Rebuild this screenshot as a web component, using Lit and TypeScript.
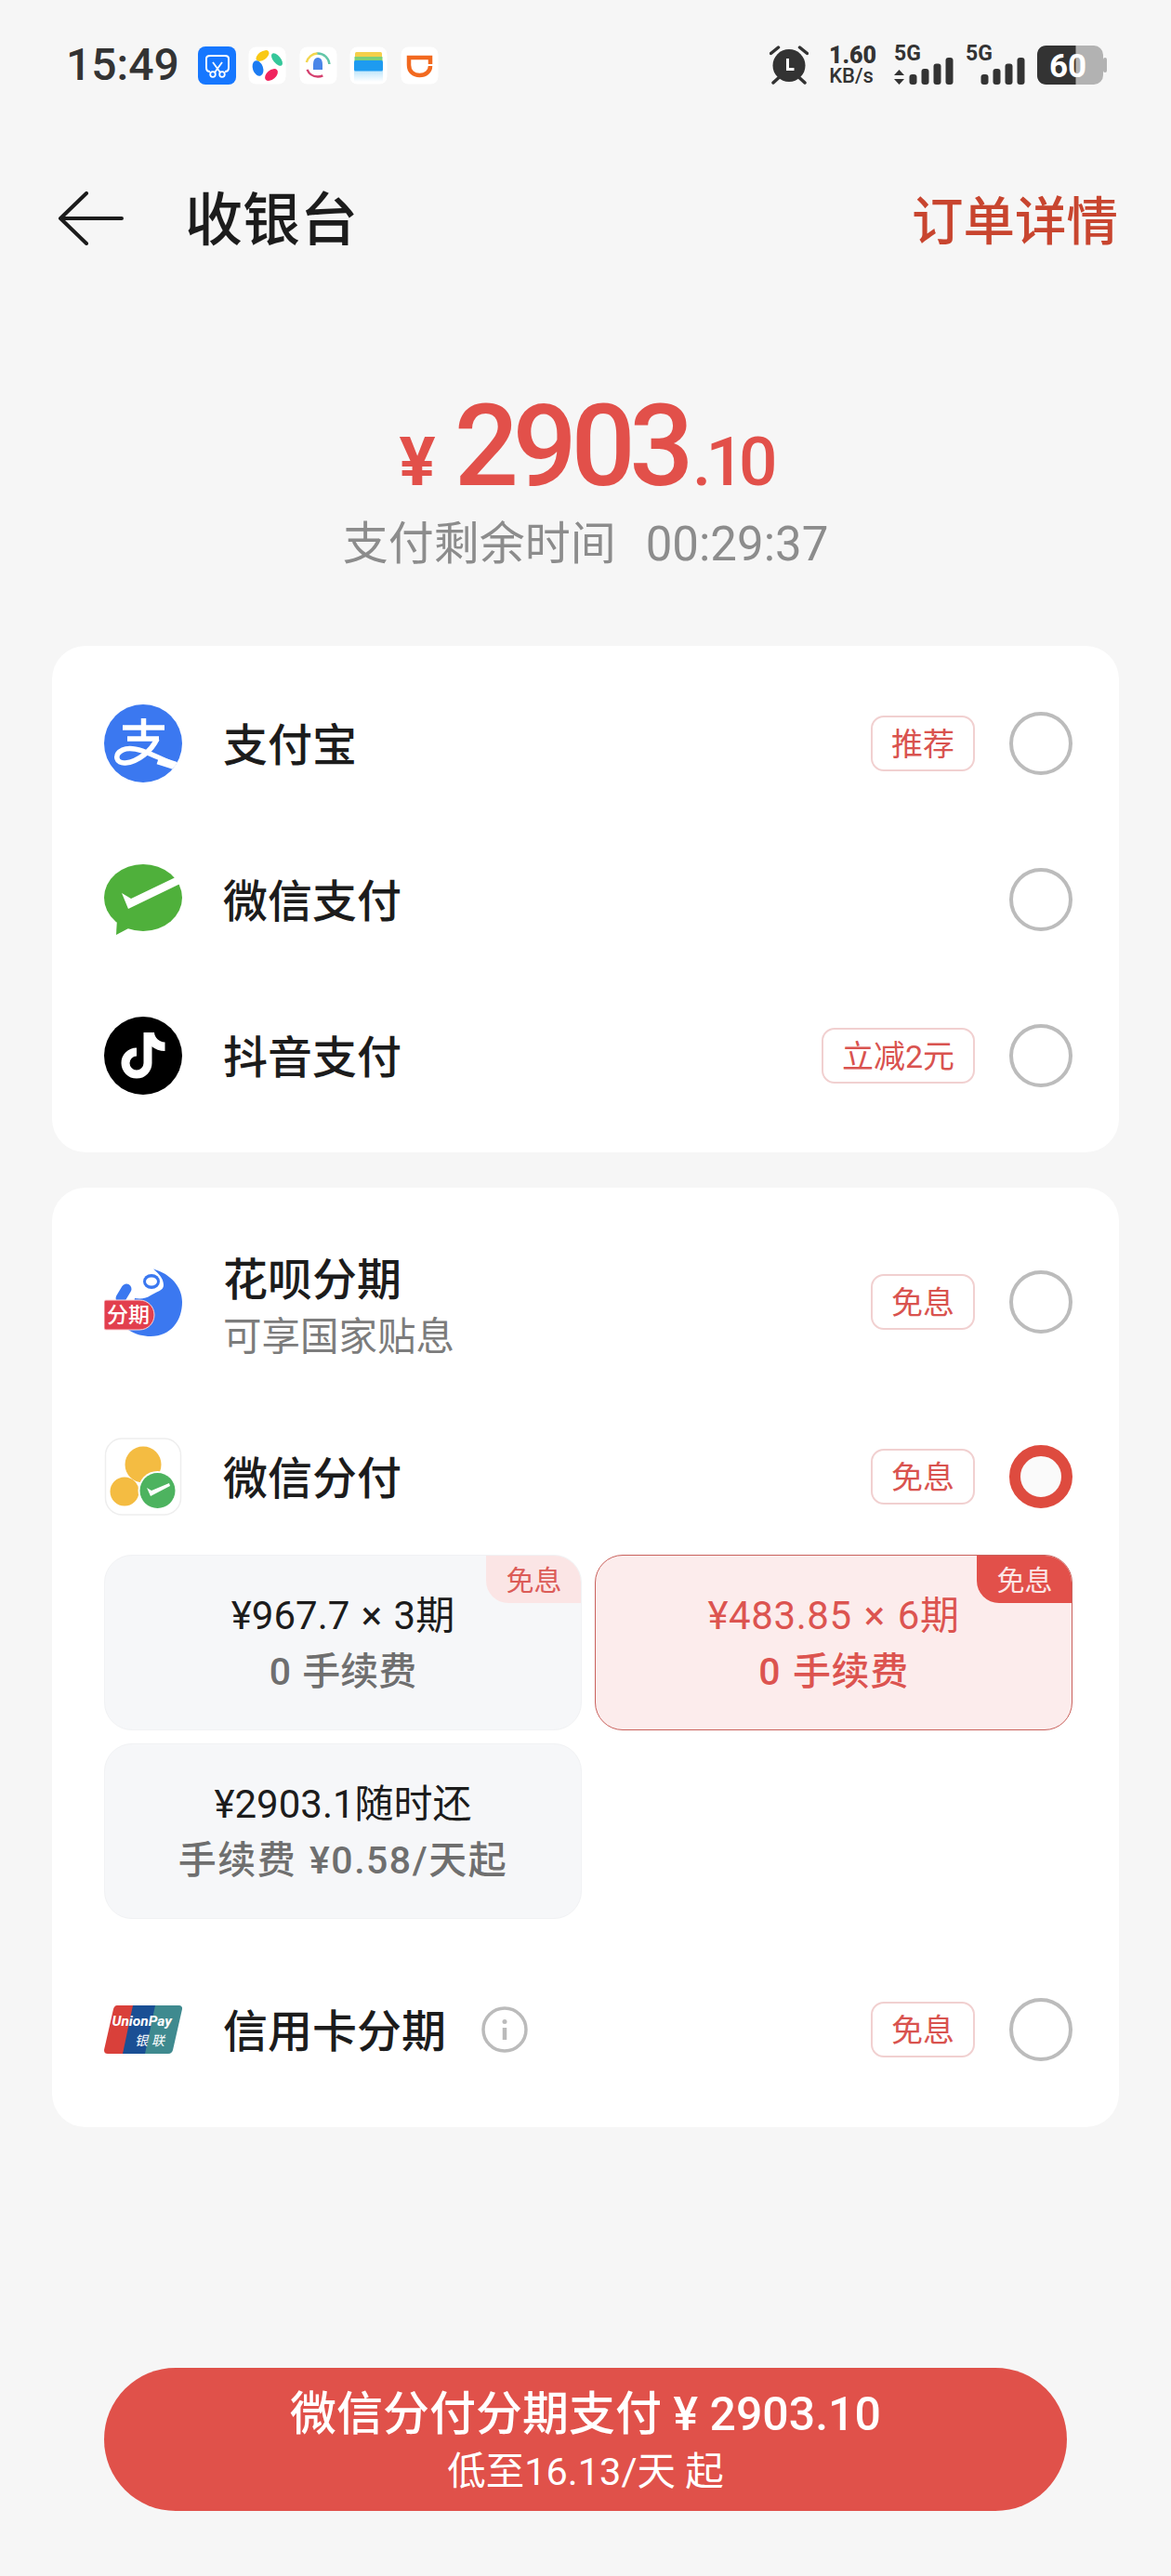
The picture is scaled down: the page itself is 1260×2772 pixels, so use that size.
import { css, html, LitElement, svg } from "lit";
import { customElement } from "lit/decorators.js";

const alipayIcon = html`<svg class="icon" viewBox="0 0 84 84">
  <defs><clipPath id="ali"><circle cx="42" cy="42" r="42"/></clipPath></defs>
  <circle cx="42" cy="42" r="42" fill="#3b78f0"/>
  <g clip-path="url(#ali)" fill="none" stroke="#fff" stroke-width="5.500">
    <path d="M20 25H65M25 37H59M42.500 15V37"/>
    <path d="M57 37C51 50 36 62 23 63C13 64 10 54 20 49C32 43 52 54 86 70"/>
    <path d="M58 60L86 69" stroke-width="9"/>
  </g>
</svg>`;

const wechatIcon = html`<svg class="icon" viewBox="0 0 84 84">
  <ellipse cx="42" cy="40" rx="42" ry="36" fill="#4fb03b"/>
  <path d="M14 62L13 80L30 71Z" fill="#4fb03b"/>
  <path d="M19 35L29 41L79 17L84 24L26 52Z" fill="#fff"/>
</svg>`;

const tiktokIcon = html`<svg class="icon" viewBox="0 0 84 84">
  <circle cx="42" cy="42" r="42" fill="#000"/>
  <path d="M47 17V50A12 12 0 1 1 35 38" fill="none" stroke="#fff" stroke-width="9"/>
  <path d="M47 17H54C54.500 23 59 27 65.500 27.500V37C60 37 55 35 51 32Z" fill="#fff"/>
</svg>`;

const huabeiIcon = html`<svg class="icon" viewBox="0 0 84 84">
  <path d="M53 6.500C72 12 84 26 84 42C84 62 72 79 50 79C42 79 34 77 26 72L33 38C40 39 46 38 50 35C56 31 64 30 64 24C64 16 58 11 53 6.500Z" fill="#3b78f0"/>
  <ellipse cx="51" cy="20" rx="9" ry="8" fill="#3b78f0"/>
  <ellipse cx="51" cy="20" rx="6" ry="4.500" fill="#fff"/>
  <path d="M18 38L24 28" stroke="#3b78f0" stroke-width="11" stroke-linecap="round"/>
  <path d="M2 40H38C47 40 54 47 54 56C54 65 47 72 38 72H2C1 72 0 71 0 70V42C0 41 1 40 2 40Z" fill="#e23f4e" stroke="#fbd5d8" stroke-width="1"/>
  <text x="3" y="64" class="icon-label" font-size="23">分期</text>
</svg>`;

const scoreIcon = html`<svg class="icon" viewBox="0 0 84 84">
  <rect x="1.500" y="1" width="81" height="82" rx="18" fill="#fff" stroke="#eeeeee" stroke-width="1.500"/>
  <circle cx="42" cy="29" r="19.500" fill="#f4bc42"/>
  <circle cx="22" cy="58" r="15.500" fill="#f4bc42"/>
  <circle cx="57.500" cy="57" r="21" fill="#fff"/>
  <circle cx="57.500" cy="57" r="19" fill="#4db35f"/>
  <path d="M46 54L50 63L71 52L70 49L51 57Z" fill="#fff"/>
</svg>`;

const unionIcon = html`<svg class="union" viewBox="0 0 84 52">
  <path d="M14 0H36L24 52H4C1 52 -.5 50 .2 47L10 4C10.500 2 12 0 14 0Z" fill="#d9403a"/>
  <path d="M31 0H58L47 52H20Z" fill="#1a4f94"/>
  <path d="M55 0H81C83 0 84.500 2 84 4L74 48C73.500 50 72 52 69 52H44Z" fill="#3f8a8f"/>
  <text x="8.500" y="22" class="union-en" font-size="15.500">UnionPay</text>
  <text x="33" y="42.500" class="union-cn" font-size="14" letter-spacing="4">银联</text>
</svg>`;

const infoIcon = html`<svg class="info" viewBox="0 0 50 50">
  <circle cx="25" cy="25" r="23" fill="none" stroke="#bbbbbb" stroke-width="3.500"/>
  <circle cx="25" cy="16.500" r="2.500" fill="#bbbbbb"/>
  <path d="M25 23V36" stroke="#bbbbbb" stroke-width="4.500"/>
</svg>`;

const alarmIcon = html`<svg class="alarm" viewBox="0 0 42 42">
  <circle cx="21" cy="21.500" r="17.500" fill="#333"/>
  <path d="M1.500 8.500L9.500 2M40.500 8.500L32.500 2M4 40L9.500 35M38 40L32.500 35" stroke="#333" stroke-width="3.500" stroke-linecap="round" fill="none"/>
  <path d="M19.500 14V25.500H26.500" stroke="#fff" stroke-width="3" fill="none"/>
</svg>`;

const simSignal = (arrows: boolean) => html`<svg class="sim" viewBox="0 -8 64 50">
  <text x="0" y="16" class="sim-label" font-size="23">5G</text>
  ${arrows ? svg`<path d="M5.500 26L11 32H0ZM5.500 42L0 36H11Z" fill="#333"/>` : ""}
  <rect x="16.500" y="31" width="8" height="11" rx="3" fill="#333"/>
  <rect x="29.500" y="25" width="8" height="17" rx="3" fill="#333"/>
  <rect x="42.500" y="19.500" width="8" height="22.500" rx="3" fill="#333"/>
  <rect x="55.500" y="13" width="8" height="29" rx="3" fill="#333"/>
</svg>`;

const batteryIcon = html`<svg class="battery" viewBox="0 0 75 42">
  <rect x="0" y="0" width="71" height="42" rx="10" fill="#b2b2b2"/>
  <rect x="71" y="13" width="4" height="16" rx="2" fill="#b2b2b2"/>
  <path d="M10 0H41.500V42H10C4 42 0 38 0 32V10C0 4 4 0 10 0Z" fill="#333"/>
  <text x="13" y="33.500" class="battery-text" font-size="35">60</text>
</svg>`;

const appIcons = [
  html`<svg class="app" viewBox="0 0 41 41">
    <rect width="41" height="41" rx="8" fill="#1677ff"/>
    <path d="M13 27C10 27 9 26 9 23V13C9 11 11 10 13 10H29C31 10 33 11 33 13V23C33 26 32 27 29 27" fill="none" stroke="#fff" stroke-width="2"/>
    <path d="M16 17L24 28M26 17L18 28" stroke="#fff" stroke-width="1.800"/>
    <circle cx="16" cy="30" r="2.800" fill="none" stroke="#fff" stroke-width="1.800"/>
    <circle cx="26" cy="30" r="2.800" fill="none" stroke="#fff" stroke-width="1.800"/>
  </svg>`,
  html`<svg class="app" viewBox="0 0 41 41">
    <rect x=".5" y=".5" width="40" height="40" rx="8" fill="#fff"/>
    <ellipse cx="15.500" cy="10" rx="8" ry="4.500" fill="#f9c916" transform="rotate(-35 15.500 10)"/>
    <ellipse cx="31" cy="14" rx="8" ry="4" fill="#35c79a" transform="rotate(50 31 14)"/>
    <ellipse cx="10.500" cy="23.500" rx="5.500" ry="8.500" fill="#1d7cf2" transform="rotate(-20 10.500 23.500)"/>
    <ellipse cx="25" cy="30.500" rx="8" ry="5" fill="#f0245e" transform="rotate(-40 25 30.500)"/>
  </svg>`,
  html`<svg class="app" viewBox="0 0 41 41">
    <rect x=".5" y=".5" width="40" height="40" rx="8" fill="#fff"/>
    <circle cx="20" cy="20" r="12.500" fill="none" stroke="#62c6a8" stroke-width="2.400" stroke-dasharray="20 59" stroke-dashoffset="22"/>
    <circle cx="20" cy="20" r="12.500" fill="none" stroke="#f2d64e" stroke-width="2.400" stroke-dasharray="16 63" stroke-dashoffset="-42"/>
    <circle cx="20" cy="20" r="12.500" fill="none" stroke="#d43f6e" stroke-width="2.400" stroke-dasharray="20 59" stroke-dashoffset="-14"/>
    <path d="M20 12C24 12 25 16 25 20V25H15V20C15 16 16 12 20 12Z" fill="#4a86e8"/>
  </svg>`,
  html`<svg class="app" viewBox="0 0 41 41">
    <defs><linearGradient id="fade" x1="0" y1="0" x2="0" y2="1"><stop offset="0" stop-color="#bfe6fb"/><stop offset="1" stop-color="#fff"/></linearGradient></defs>
    <rect x=".5" y=".5" width="40" height="40" rx="8" fill="#fff"/>
    <rect x="5" y="26" width="31" height="12" fill="url(#fade)"/>
    <rect x="6" y="6" width="29" height="6" rx="1.500" fill="#f5cf4a"/>
    <rect x="5.500" y="11" width="30" height="5" fill="#7ccf7a"/>
    <rect x="5" y="15" width="31" height="11.500" rx="1.500" fill="#1e9bf0"/>
  </svg>`,
  html`<svg class="app" viewBox="0 0 41 41">
    <rect x=".5" y=".5" width="40" height="40" rx="8" fill="#fff"/>
    <path d="M32 19V12H9V20C9 27 14 31 20.500 31C27 31 32 27 32 21" fill="none" stroke="#f2691f" stroke-width="4.500"/>
  </svg>`,
];

@customElement("app-root")
class AppRoot extends LitElement {
  static styles = css`
    :host {
      display: block;
      width: 1260px;
      height: 2772px;
      background: #f6f6f6;
      color: #1c1c1c;
      font-family: Roboto, "Noto Sans CJK SC", sans-serif;
      overflow: hidden;
    }
    svg {
      display: block;
      flex: none;
    }

    .status {
      display: flex;
      justify-content: space-between;
      align-items: center;
      height: 42px;
      padding: 49px 69px 0 71px;
      color: #333;
    }
    .status-left,
    .status-right {
      display: flex;
      align-items: center;
    }
    .time {
      font-size: 48px;
      font-weight: 500;
      line-height: 42px;
      margin-right: 20px;
    }
    .apps {
      display: flex;
      gap: 13.500px;
    }
    .app {
      width: 41px;
      height: 41px;
    }
    .alarm {
      width: 42px;
      height: 42px;
      margin-right: 22px;
    }
    .speed {
      display: flex;
      flex-direction: column;
      width: 48px;
      margin-right: 22px;
      font-weight: 700;
      text-align: center;
      white-space: nowrap;
    }
    .speed b {
      font-size: 25px;
      line-height: 24px;
    }
    .speed span {
      font-size: 22px;
      line-height: 20px;
      font-weight: 500;
    }
    .sim {
      width: 64px;
      height: 50px;
      margin: -8px 13px 0 0;
    }
    .sim-label {
      font-family: Roboto, sans-serif;
      font-weight: 700;
      fill: #333;
    }
    .battery {
      width: 75px;
      height: 42px;
    }
    .battery-text {
      font-family: Roboto, sans-serif;
      font-weight: 700;
      fill: #fff;
    }

    .nav {
      display: flex;
      align-items: center;
      height: 80px;
      margin-top: 104px;
      padding: 0 57px 0 62px;
    }
    .back {
      width: 71px;
      height: 58px;
      margin-right: 66px;
    }
    .nav h1 {
      flex: 1;
      margin: 6px 0 0;
      font-size: 62px;
      font-weight: 500;
      line-height: 80px;
    }
    .detail {
      margin-bottom: 2px;
      font-size: 55.500px;
      font-weight: 500;
      color: #c8452f;
    }

    .price {
      display: flex;
      justify-content: center;
      align-items: baseline;
      height: 130px;
      margin-top: 141px;
      color: #e2504a;
      font-weight: 500;
      line-height: 130px;
    }
    .price .yen {
      font-size: 73px;
      font-weight: 700;
      margin-right: 20px;
    }
    .price .main {
      font-size: 122px;
      letter-spacing: -6.500px;
    }
    .price .cents {
      font-size: 73px;
      font-weight: 500;
      letter-spacing: -6px;
      margin-left: 5px;
    }
    .remain {
      display: flex;
      justify-content: center;
      gap: 32px;
      align-items: center;
      height: 60px;
      margin-top: 10px;
      font-size: 49px;
      color: #8c8c8c;
      line-height: 60px;
    }
    .remain span:last-child {
      font-size: 51px;
    }

    .card {
      margin: 0 56px;
      background: #fff;
      border-radius: 36px;
    }
    .card-a {
      margin-top: 79px;
      padding: 21px 50px 20px 56px;
    }
    .card-b {
      margin-top: 38px;
      padding: 43px 50px 25px 56px;
    }
    .row {
      display: flex;
      align-items: center;
      height: 168px;
    }
    .row-tall {
      height: 160px;
    }
    .row-score {
      height: 168px;
      margin-top: 24px;
    }
    .row-union {
      height: 160px;
      margin-top: 39px;
    }
    .icon {
      width: 84px;
      height: 84px;
      margin-right: 44px;
    }
    .union {
      width: 84px;
      height: 52px;
      margin-right: 44px;
    }
    .icon-label {
      fill: #fff;
      font-weight: 500;
      font-family: "Noto Sans CJK SC", sans-serif;
    }
    .union-en {
      fill: #fff;
      font-weight: 700;
      font-style: italic;
      font-family: Roboto, sans-serif;
    }
    .union-cn {
      fill: #fff;
      font-family: "Noto Sans CJK SC", sans-serif;
      font-style: italic;
    }
    .name {
      padding-top: 5px;
      font-size: 48px;
      line-height: 62px;
      font-weight: 500;
    }
    .names {
      display: flex;
      flex-direction: column;
      padding-top: 8px;
    }
    .sub {
      font-size: 41.500px;
      line-height: 60px;
      color: #7c7c7c;
    }
    .info {
      width: 50px;
      height: 50px;
      margin-left: 38px;
    }
    .spacer {
      flex: 1;
    }
    .tag {
      box-sizing: border-box;
      height: 60px;
      padding: 0 20px;
      border: 2px solid #f1d0d0;
      border-radius: 14px;
      font-size: 34px;
      line-height: 58px;
      color: #d9534f;
      white-space: nowrap;
    }
    .radio {
      box-sizing: border-box;
      width: 68px;
      height: 68px;
      margin-left: 37px;
      border: 4.500px solid #bcbcbc;
      border-radius: 50%;
    }
    .radio.on {
      border: 12.500px solid #de4b3f;
      background: #fafafa;
    }

    .plans {
      display: grid;
      grid-template-columns: 514px 514px;
      grid-auto-rows: 189px;
      gap: 14px;
    }
    .plan {
      box-sizing: border-box;
      position: relative;
      display: flex;
      flex-direction: column;
      justify-content: center;
      align-items: center;
      padding-top: 2px;
      border: 1.500px solid #f1f2f4;
      border-radius: 30px;
      background: #f6f7f9;
      font-size: 42px;
      line-height: 60px;
      word-spacing: 2px;
      overflow: hidden;
      white-space: nowrap;
    }
    .plan .fee {
      font-size: 41px;
      color: #6f6f6f;
      font-weight: 500;
    }
    .plan .fee.wide {
      letter-spacing: 1.500px;
    }
    .plan.on {
      border: 1.500px solid #c9615c;
      background: #fcecec;
      color: #dc5450;
      letter-spacing: 0.6px;
    }
    .plan.on .fee {
      color: #dc5450;
    }
    .free {
      position: absolute;
      top: -1.500px;
      right: -1.500px;
      width: 104px;
      height: 52px;
      border-bottom-left-radius: 24px;
      background: #fbe5e5;
      color: #dc5c58;
      font-size: 30px;
      line-height: 56px;
      letter-spacing: 0;
      text-align: center;
    }
    .plan.on .free {
      background: #e2504a;
      color: #fbe5e5;
    }

    .pay {
      box-sizing: border-box;
      display: flex;
      flex-direction: column;
      justify-content: center;
      align-items: center;
      height: 154px;
      margin: 259px 112px 0;
      padding-top: 7px;
      border-radius: 77px;
      background: #e0514a;
      color: #fff;
    }
    .pay strong {
      font-size: 50px;
      font-weight: 500;
      line-height: 62px;
    }
    .pay span {
      font-size: 41.500px;
      line-height: 62px;
    }
  `;

  render() {
    return html`
      <div class="status">
        <div class="status-left">
          <span class="time">15:49</span>
          <div class="apps">${appIcons}</div>
        </div>
        <div class="status-right">
          ${alarmIcon}
          <div class="speed"><b>1.60</b><span>KB/s</span></div>
          ${simSignal(true)} ${simSignal(false)} ${batteryIcon}
        </div>
      </div>

      <div class="nav">
        <svg class="back" viewBox="0 0 71 58" fill="none" stroke="#1c1c1c" stroke-width="4" stroke-linecap="round" stroke-linejoin="round">
          <path d="M69 29H3M31 2L3 29L31 56"/>
        </svg>
        <h1>收银台</h1>
        <span class="detail">订单详情</span>
      </div>

      <div class="price">
        <span class="yen">¥</span><span class="main">2903</span><span class="cents">.10</span>
      </div>
      <div class="remain"><span>支付剩余时间</span><span>00:29:37</span></div>

      <div class="card card-a">
        <div class="row">
          ${alipayIcon}<span class="name">支付宝</span><span class="spacer"></span>
          <span class="tag">推荐</span><span class="radio"></span>
        </div>
        <div class="row">
          ${wechatIcon}<span class="name">微信支付</span><span class="spacer"></span>
          <span class="radio"></span>
        </div>
        <div class="row">
          ${tiktokIcon}<span class="name">抖音支付</span><span class="spacer"></span>
          <span class="tag">立减2元</span><span class="radio"></span>
        </div>
      </div>

      <div class="card card-b">
        <div class="row row-tall">
          ${huabeiIcon}
          <div class="names">
            <span class="name">花呗分期</span>
            <span class="sub">可享国家贴息</span>
          </div>
          <span class="spacer"></span>
          <span class="tag">免息</span><span class="radio"></span>
        </div>
        <div class="row row-score">
          ${scoreIcon}<span class="name">微信分付</span><span class="spacer"></span>
          <span class="tag">免息</span><span class="radio on"></span>
        </div>
        <div class="plans">
          <div class="plan">
            <span class="free">免息</span>
            <span>¥967.7 × 3期</span>
            <span class="fee">0 手续费</span>
          </div>
          <div class="plan on">
            <span class="free">免息</span>
            <span>¥483.85 × 6期</span>
            <span class="fee">0 手续费</span>
          </div>
          <div class="plan">
            <span>¥2903.1随时还</span>
            <span class="fee wide">手续费 ¥0.58/天起</span>
          </div>
        </div>
        <div class="row row-union">
          ${unionIcon}<span class="name">信用卡分期</span>${infoIcon}<span class="spacer"></span>
          <span class="tag">免息</span><span class="radio"></span>
        </div>
      </div>

      <div class="pay">
        <strong>微信分付分期支付 ¥ 2903.10</strong>
        <span>低至16.13/天 起</span>
      </div>
    `;
  }
}
